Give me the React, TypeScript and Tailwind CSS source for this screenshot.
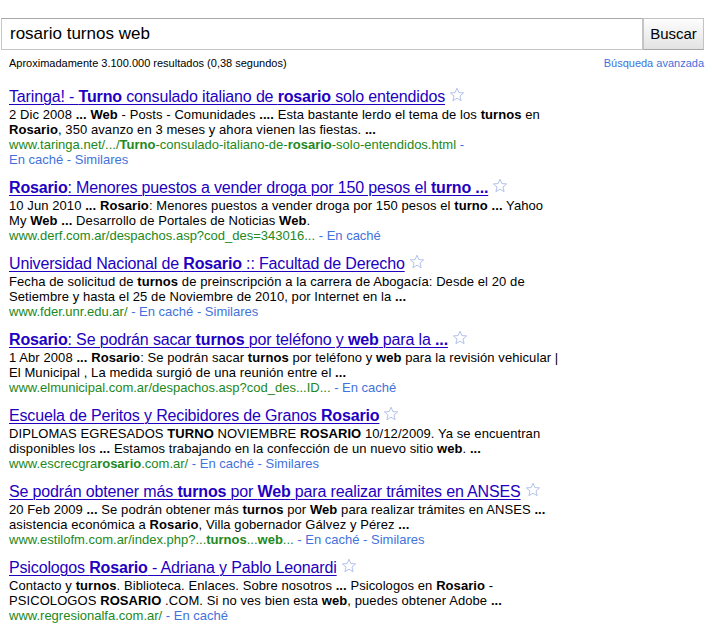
import React from 'react';

type Result = {
  title: React.ReactNode;
  lines: React.ReactNode[];
  url: React.ReactNode;
  cache: boolean;
  similar: boolean;
  // put cache links on a separate line (first result)
  ownLine?: boolean;
};

const B = ({ children }: { children: React.ReactNode }) => <b className="font-bold">{children}</b>;

const results: Result[] = [
  {
    title: <>Taringa! - <B>Turno</B> consulado italiano de <B>rosario</B> solo entendidos</>,
    lines: [
      <>2 Dic 2008 <B>...</B> <B>Web</B> - Posts - Comunidades <B>....</B> Esta bastante lerdo el tema de los <B>turnos</B> en</>,
      <><B>Rosario</B>, 350 avanzo en 3 meses y ahora vienen las fiestas. <B>...</B></>,
    ],
    url: <>www.taringa.net/.../<B>Turno</B>-consulado-italiano-de-<B>rosario</B>-solo-entendidos.html</>,
    cache: true,
    similar: true,
    ownLine: true,
  },
  {
    title: <><B>Rosario</B>: Menores puestos a vender droga por 150 pesos el <B>turno ...</B></>,
    lines: [
      <>10 Jun 2010 <B>...</B> <B>Rosario</B>: Menores puestos a vender droga por 150 pesos el <B>turno ...</B> Yahoo</>,
      <>My <B>Web ...</B> Desarrollo de Portales de Noticias <B>Web</B>.</>,
    ],
    url: <>www.derf.com.ar/despachos.asp?cod_des=343016...</>,
    cache: true,
    similar: false,
  },
  {
    title: <>Universidad Nacional de <B>Rosario</B> :: Facultad de Derecho</>,
    lines: [
      <>Fecha de solicitud de <B>turnos</B> de preinscripción a la carrera de Abogacía: Desde el 20 de</>,
      <>Setiembre y hasta el 25 de Noviembre de 2010, por Internet en la <B>...</B></>,
    ],
    url: <>www.fder.unr.edu.ar/</>,
    cache: true,
    similar: true,
  },
  {
    title: <><B>Rosario</B>: Se podrán sacar <B>turnos</B> por teléfono y <B>web</B> para la <B>...</B></>,
    lines: [
      <>1 Abr 2008 <B>...</B> <B>Rosario</B>: Se podrán sacar <B>turnos</B> por teléfono y <B>web</B> para la revisión vehicular |</>,
      <>El Municipal , La medida surgió de una reunión entre el <B>...</B></>,
    ],
    url: <>www.elmunicipal.com.ar/despachos.asp?cod_des...ID...</>,
    cache: true,
    similar: false,
  },
  {
    title: <>Escuela de Peritos y Recibidores de Granos <B>Rosario</B></>,
    lines: [
      <>DIPLOMAS EGRESADOS <B>TURNO</B> NOVIEMBRE <B>ROSARIO</B> 10/12/2009. Ya se encuentran</>,
      <>disponibles los <B>...</B> Estamos trabajando en la confección de un nuevo sitio <B>web</B>. <B>...</B></>,
    ],
    url: <>www.escrecgra<B>rosario</B>.com.ar/</>,
    cache: true,
    similar: true,
  },
  {
    title: <>Se podrán obtener más <B>turnos</B> por <B>Web</B> para realizar trámites en ANSES</>,
    lines: [
      <>20 Feb 2009 <B>...</B> Se podrán obtener más <B>turnos</B> por <B>Web</B> para realizar trámites en ANSES <B>...</B></>,
      <>asistencia económica a <B>Rosario</B>, Villa gobernador Gálvez y Pérez <B>...</B></>,
    ],
    url: <>www.estilofm.com.ar/index.php?...<B>turnos</B>...<B>web</B>...</>,
    cache: true,
    similar: true,
  },
  {
    title: <>Psicologos <B>Rosario</B> - Adriana y Pablo Leonardi</>,
    lines: [
      <>Contacto y <B>turnos</B>. Biblioteca. Enlaces. Sobre nosotros <B>...</B> Psicologos en <B>Rosario</B> -</>,
      <>PSICOLOGOS <B>ROSARIO</B> .COM. Si no ves bien esta <B>web</B>, puedes obtener Adobe <B>...</B></>,
    ],
    url: <>www.regresionalfa.com.ar/</>,
    cache: true,
    similar: false,
  },
];

const Star = () => (
  <svg width="16" height="16" viewBox="0 0 16 16" className="ml-[4px] inline-block align-[-1px]">
    <path
      d="M8 1.2 L9.9 5.6 L14.6 5.9 L11 9 L12.1 13.7 L8 11.2 L3.9 13.7 L5 9 L1.4 5.9 L6.1 5.6 Z"
      fill="none"
      stroke="#b3c2ec"
      strokeWidth="1"
      strokeLinejoin="round"
    />
  </svg>
);

const CacheLinks = ({ cache, similar }: { cache: boolean; similar: boolean }) => (
  <>
    {cache && <span className="text-[#4272db]">En caché</span>}
    {similar && (
      <>
        <span className="text-[#4272db]"> - </span>
        <span className="text-[#4272db]">Similares</span>
      </>
    )}
  </>
);

export default function App() {
  return (
    <div className="min-h-[632px] w-[721px] bg-white font-['Liberation_Sans',Arial,sans-serif] text-black">
      {/* search bar */}
      <div className="flex pl-px pt-[18px]">
        <div className="flex h-[32px] w-[642px] items-center border border-[#c6c6c6] border-t-[#a9a9a9] pl-[8px] text-[17px]">
          rosario turnos web
        </div>
        <button className="h-[32px] w-[61px] border border-[#c3c3c3] border-b-[#a5a5a5] bg-gradient-to-b from-[#fdfdfd] to-[#e3e3e3] text-[15px] text-black">
          Buscar
        </button>
      </div>

      {/* stats */}
      <div className="mt-[6px] flex w-[704px] justify-between pl-[9px] text-[11px] leading-[14px]">
        <span>Aproximadamente 3.100.000 resultados (0,38 segundos)</span>
        <span className="text-[#4272db]">Búsqueda avanzada</span>
      </div>

      {/* results */}
      <ol className="mt-[16px] flex flex-col gap-[10px] pl-[9px]">
        {results.map((r, i) => (
          <li key={i} className="flex flex-col">
            <div className="whitespace-nowrap text-[16px] leading-[21px] tracking-[-0.15px] text-[#2200c1]">
              <span className="underline decoration-1 underline-offset-[2px]">{r.title}</span>
              <Star />
            </div>
            <div className="whitespace-nowrap text-[13px] leading-[15px]">
              {r.lines.map((l, j) => (
                <div key={j} className="tracking-[0.08px]">{l}</div>
              ))}
              {r.ownLine ? (
                <>
                  <div>
                    <span className="text-[#228822]">{r.url}</span>
                    <span className="text-[#4272db]"> -</span>
                  </div>
                  <div>
                    <CacheLinks cache={r.cache} similar={r.similar} />
                  </div>
                </>
              ) : (
                <div>
                  <span className="text-[#228822]">{r.url}</span>
                  <span className="text-[#4272db]"> - </span>
                  <CacheLinks cache={r.cache} similar={r.similar} />
                </div>
              )}
            </div>
          </li>
        ))}
      </ol>
    </div>
  );
}
